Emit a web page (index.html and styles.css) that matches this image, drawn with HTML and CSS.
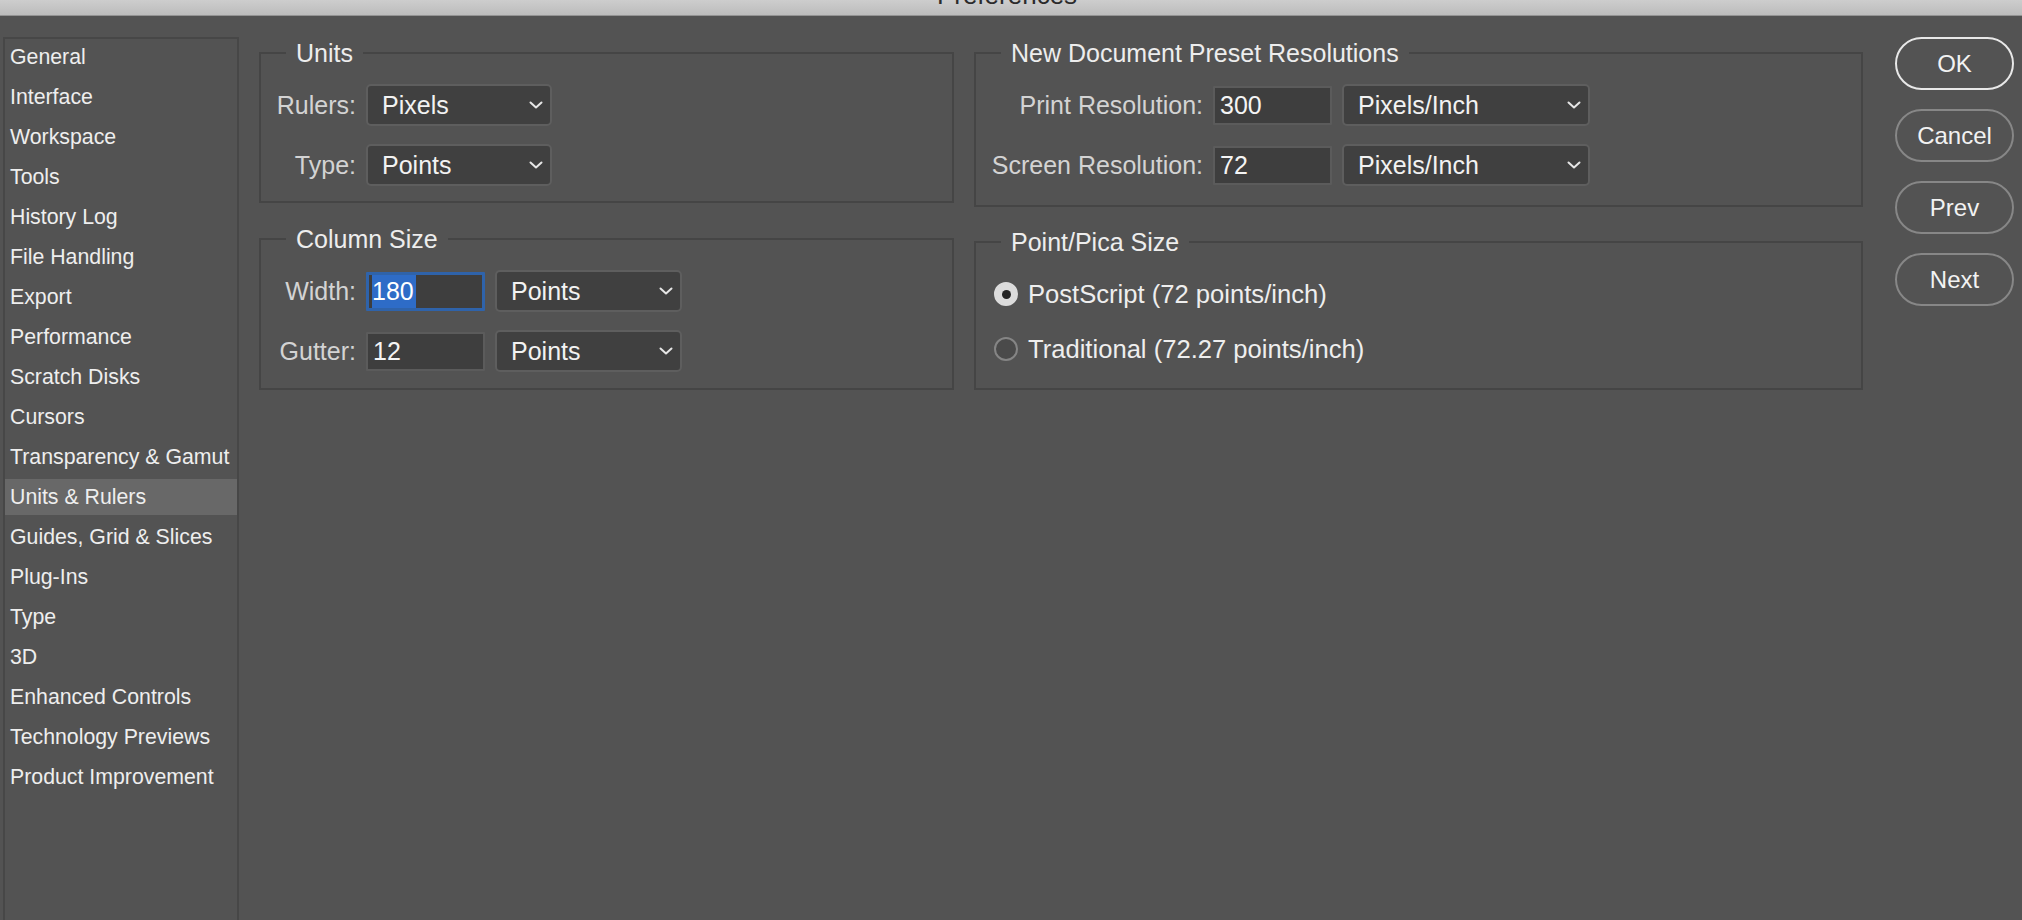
FILE: index.html
```html
<!DOCTYPE html>
<html lang="en">
<head>
<meta charset="utf-8">
<title>Preferences</title>
<link rel="stylesheet" href="styles.css">
</head>
<body>
<div class="titlebar"><span>Preferences</span></div>
<div class="layout">
  <nav class="sidebar">
    <ul class="nav-list">
      <li class="nav-item">General</li>
      <li class="nav-item">Interface</li>
      <li class="nav-item">Workspace</li>
      <li class="nav-item">Tools</li>
      <li class="nav-item">History Log</li>
      <li class="nav-item">File Handling</li>
      <li class="nav-item">Export</li>
      <li class="nav-item">Performance</li>
      <li class="nav-item">Scratch Disks</li>
      <li class="nav-item">Cursors</li>
      <li class="nav-item">Transparency &amp; Gamut</li>
      <li class="nav-item selected">Units &amp; Rulers</li>
      <li class="nav-item">Guides, Grid &amp; Slices</li>
      <li class="nav-item">Plug-Ins</li>
      <li class="nav-item">Type</li>
      <li class="nav-item">3D</li>
      <li class="nav-item">Enhanced Controls</li>
      <li class="nav-item">Technology Previews</li>
      <li class="nav-item">Product Improvement</li>
    </ul>
  </nav>

  <div class="col col-left">
    <fieldset class="group group-units">
      <legend>Units</legend>
      <div class="form-grid grid-units">
        <label class="lbl">Rulers:</label>
        <div class="select"><span>Pixels</span><svg class="chev" width="14" height="8" viewBox="0 0 14 8"><polyline points="1.5,1.5 7,6.5 12.5,1.5"/></svg></div>
        <label class="lbl">Type:</label>
        <div class="select"><span>Points</span><svg class="chev" width="14" height="8" viewBox="0 0 14 8"><polyline points="1.5,1.5 7,6.5 12.5,1.5"/></svg></div>
      </div>
    </fieldset>

    <fieldset class="group group-column">
      <legend>Column Size</legend>
      <div class="form-grid grid-column">
        <label class="lbl">Width:</label>
        <div class="field focused"><span class="sel-text">180</span></div>
        <div class="select"><span>Points</span><svg class="chev" width="14" height="8" viewBox="0 0 14 8"><polyline points="1.5,1.5 7,6.5 12.5,1.5"/></svg></div>
        <label class="lbl">Gutter:</label>
        <div class="field"><span>12</span></div>
        <div class="select"><span>Points</span><svg class="chev" width="14" height="8" viewBox="0 0 14 8"><polyline points="1.5,1.5 7,6.5 12.5,1.5"/></svg></div>
      </div>
    </fieldset>
  </div>

  <div class="col col-right">
    <fieldset class="group group-preset">
      <legend>New Document Preset Resolutions</legend>
      <div class="form-grid grid-preset">
        <label class="lbl">Print Resolution:</label>
        <div class="field"><span>300</span></div>
        <div class="select"><span>Pixels/Inch</span><svg class="chev" width="14" height="8" viewBox="0 0 14 8"><polyline points="1.5,1.5 7,6.5 12.5,1.5"/></svg></div>
        <label class="lbl">Screen Resolution:</label>
        <div class="field"><span>72</span></div>
        <div class="select"><span>Pixels/Inch</span><svg class="chev" width="14" height="8" viewBox="0 0 14 8"><polyline points="1.5,1.5 7,6.5 12.5,1.5"/></svg></div>
      </div>
    </fieldset>

    <fieldset class="group group-pica">
      <legend>Point/Pica Size</legend>
      <div class="radio-list">
        <div class="radio-row"><span class="radio checked"></span><span class="radio-label">PostScript (72 points/inch)</span></div>
        <div class="radio-row"><span class="radio"></span><span class="radio-label">Traditional (72.27 points/inch)</span></div>
      </div>
    </fieldset>
  </div>

  <div class="buttons">
    <div class="btn default">OK</div>
    <div class="btn">Cancel</div>
    <div class="btn">Prev</div>
    <div class="btn">Next</div>
  </div>
</div>
</body>
</html>
```

FILE: styles.css
```css
html, body {
  margin: 0;
  padding: 0;
}
body {
  width: 2022px;
  height: 920px;
  overflow: hidden;
  background: #535353;
  font-family: "Liberation Sans", Arial, sans-serif;
  color: #ececec;
}

.titlebar {
  height: 15px;
  border-bottom: 1px solid #939393;
  background: linear-gradient(#cdcdcd, #bcbcbc);
  overflow: hidden;
  text-align: center;
}
.titlebar span {
  display: block;
  font-size: 26px;
  line-height: 26px;
  margin-top: -18px;
  padding-right: 8px;
  color: #2b2b2b;
}

.layout {
  display: flex;
  height: 904px;
  box-sizing: border-box;
  padding: 21px 8px 0 3px;
}

/* sidebar */
.sidebar {
  flex: none;
  width: 236px;
  box-sizing: border-box;
  border: 2px solid #474747;
  border-bottom: none;
}
.nav-list {
  list-style: none;
  margin: 0;
  padding: 0;
  display: flex;
  flex-direction: column;
  gap: 4px;
}
.nav-item {
  height: 36px;
  line-height: 36px;
  padding-left: 5px;
  font-size: 21.3px;
  color: #eeeeee;
  white-space: nowrap;
}
.nav-item.selected {
  background: #686868;
}

/* columns */
.col {
  flex: none;
  display: flex;
  flex-direction: column;
  margin-top: 2px;
}
.col-left {
  width: 695px;
  margin-left: 20px;
  gap: 22px;
}
.col-right {
  width: 889px;
  margin-left: 20px;
  gap: 21px;
}

.group {
  margin: 0;
  padding: 0;
  border: 2px solid #454545;
  box-sizing: border-box;
  min-width: 0;
}
.group legend {
  margin-left: 25px;
  padding: 0 10px;
  font-size: 25px;
  line-height: 28px;
  color: #ededed;
}
.group-units { height: 164px; }
.group-column { height: 165px; }
.group-preset { height: 168px; }
.group-pica { height: 162px; }

.form-grid {
  display: grid;
  column-gap: 10px;
  row-gap: 18px;
  padding-top: 17px;
  grid-auto-rows: 42px;
  align-items: center;
}
.grid-units { grid-template-columns: 95px 186px; }
.grid-column { grid-template-columns: 95px 119px 187px; }
.grid-preset { grid-template-columns: 227px 119px 248px; }

.lbl {
  text-align: right;
  font-size: 25px;
  color: #d3d3d3;
  white-space: nowrap;
}

.select {
  height: 42px;
  box-sizing: border-box;
  border: 2px solid #5e5e5e;
  border-radius: 5px;
  background: #404040;
  display: flex;
  align-items: center;
  justify-content: space-between;
  padding: 0 7px 0 14px;
  font-size: 25px;
  color: #f2f2f2;
}
.chev {
  flex: none;
}
.chev polyline {
  fill: none;
  stroke: #e6e6e6;
  stroke-width: 2;
  stroke-linecap: round;
  stroke-linejoin: round;
}

.field {
  height: 39px;
  box-sizing: border-box;
  border: 2px solid #5b5b5b;
  border-radius: 1px;
  background: #3e3e3e;
  display: flex;
  align-items: center;
  padding: 0 5px;
  font-size: 25px;
  color: #f4f4f4;
}
.field.focused {
  border: 3px solid #2f63aa;
  padding: 0 0 0 3px;
  align-items: stretch;
}
.sel-text {
  background: #2e6cc7;
  line-height: 32px;
  color: #ffffff;
  padding-right: 2px;
}

/* radios */
.radio-list {
  display: flex;
  flex-direction: column;
  gap: 19px;
  padding: 20px 0 0 18px;
}
.radio-row {
  display: flex;
  align-items: center;
  gap: 10px;
  height: 36px;
}
.radio {
  width: 24px;
  height: 24px;
  box-sizing: border-box;
  border-radius: 50%;
  border: 2px solid #858585;
  background: #4a4a4a;
  display: flex;
  align-items: center;
  justify-content: center;
}
.radio.checked {
  border-color: #dcdcdc;
  background: #dcdcdc;
}
.radio.checked::after {
  content: "";
  width: 9px;
  height: 9px;
  border-radius: 50%;
  background: #262626;
}
.radio-label {
  font-size: 25.6px;
  color: #eeeeee;
  white-space: nowrap;
}

/* buttons */
.buttons {
  flex: none;
  width: 119px;
  margin-left: 32px;
  display: flex;
  flex-direction: column;
  gap: 19px;
}
.btn {
  height: 53px;
  box-sizing: border-box;
  border: 2px solid #878787;
  border-radius: 27px;
  display: flex;
  align-items: center;
  justify-content: center;
  font-size: 24px;
  color: #f2f2f2;
}
.btn.default {
  border-color: #e8e8e8;
}
```
